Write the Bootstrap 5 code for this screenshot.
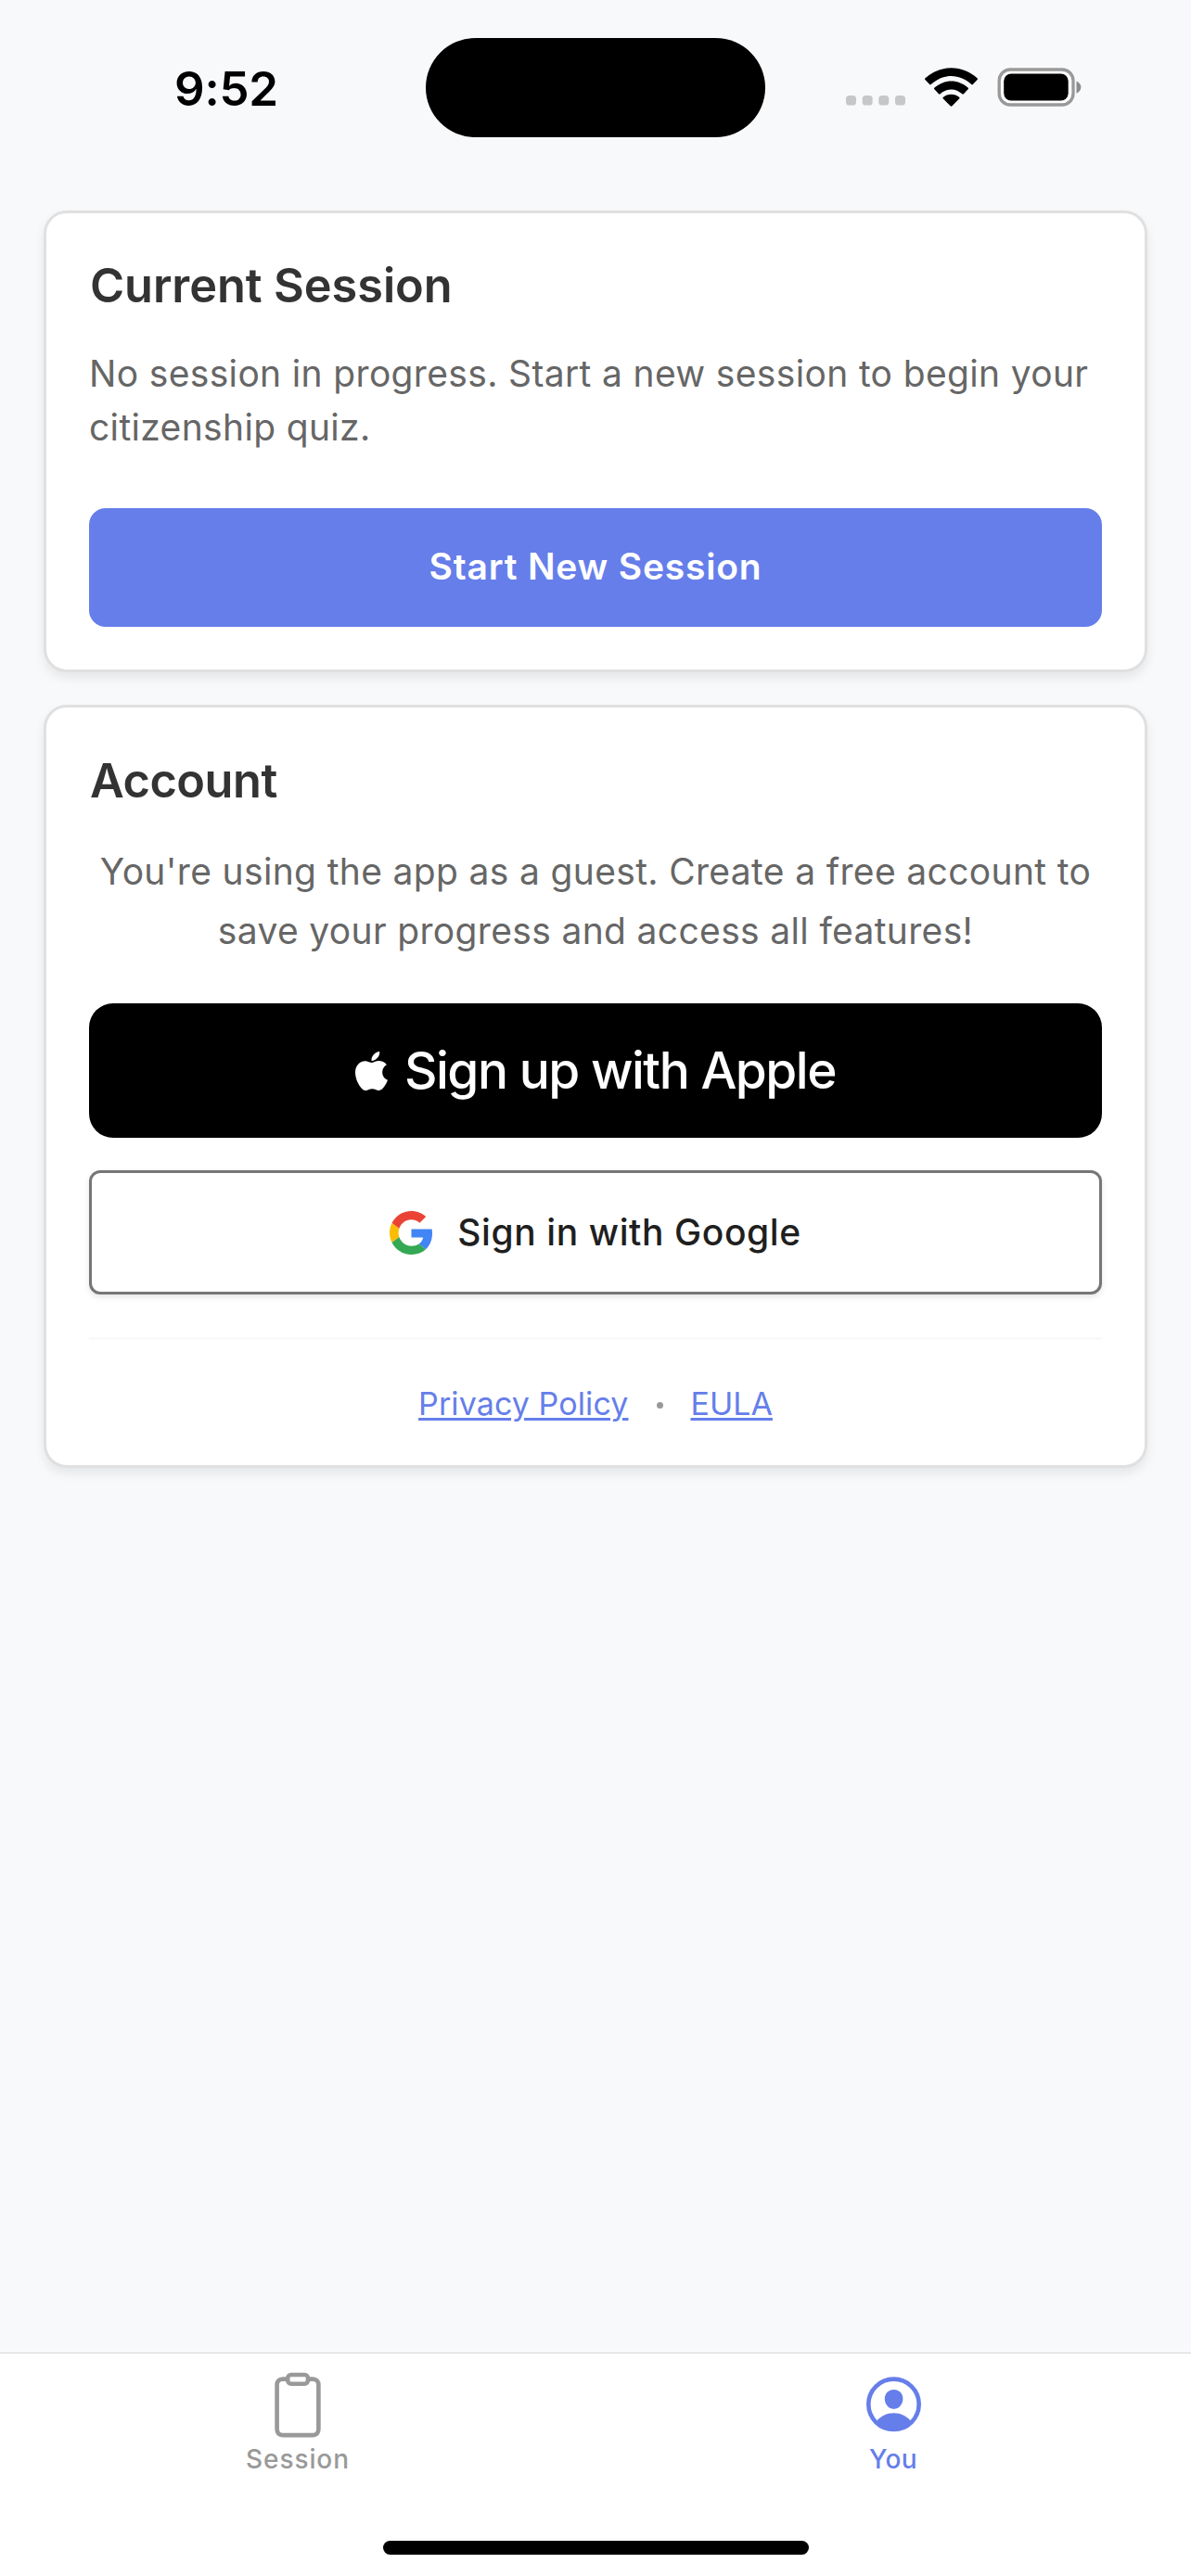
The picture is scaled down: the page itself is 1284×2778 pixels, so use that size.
<!DOCTYPE html>
<html lang="en">
<head>
<meta charset="utf-8">
<meta name="viewport" content="width=device-width, initial-scale=1">
<title>Citizenship Quiz</title>
<link rel="stylesheet" href="https://cdn.jsdelivr.net/npm/bootstrap@5.3.0/dist/css/bootstrap.min.css">
<style>
  body { width: 1284px; height: 2778px; margin: 0; background: #f8f9fb; font-family: Inter, "Liberation Sans", sans-serif; overflow: hidden; }
  svg { display: block; flex: none; }
  .status-bar { height: 227px; padding-top: 40.5px; }
  .status-time { width: 459px; padding-left: 188px; font-size: 51px; font-weight: 600; line-height: 109px; letter-spacing: -.2px; color: #000; }
  .island { width: 366px; height: 107px; border-radius: 54px; background: #000; }
  .status-icons { width: 459px; padding: 32px 0 0 86.500px; }
  .dots { margin-top: 29px; }
  .wifi { margin-left: 21.500px; }
  .battery { margin-left: 20.500px; }
  .screen { padding: 0 47px; }
  .panel { border: 3px solid #e0e0e0; border-radius: 25px; padding: 46px; background: #fff; box-shadow: 0 6px 12px rgba(0,0,0,.08); }
  .panel + .panel { margin-top: 35px; }
  .panel-title { font-size: 50.5px; font-weight: 600; line-height: 64px; letter-spacing: -.1px; color: #333; margin: 0 0 34px 1px; }
  .panel-title.account { padding-top: 1px; letter-spacing: -.5px; }
  .panel-text { font-size: 39px; line-height: 58px; letter-spacing: .34px; color: #666; margin: 0; }
  .panel-text.guest { line-height: 64px; }
  .panel .btn { padding: 0; }
  .btn-start, .btn-start:hover { height: 128px; margin-top: 58px; border: 0; border-radius: 18px; background: #667eea; color: #fff; font-size: 39px; font-weight: 600; letter-spacing: .8px; }
  .panel .btn-start { padding-bottom: 1px; }
  .btn-apple, .btn-apple:hover { height: 145px; margin-top: 46px; border: 0; border-radius: 26px; background: #000; color: #fff; font-size: 55px; font-weight: 500; letter-spacing: -1.5px; gap: 18px; }
  .btn-google, .btn-google:hover { height: 134px; margin-top: 35px; border: 3px solid #747775; border-radius: 12px; background: #fff; color: #1f1f1f; font-size: 39px; font-weight: 500; letter-spacing: .6px; gap: 26px; box-shadow: 0 3px 6px rgba(0,0,0,.1); }
  .legal { margin-top: 46px; border-top: 3px solid #f8f9fa; padding: 48px 0 0; font-size: 34px; line-height: 41px; }
  .legal a { color: #667eea; text-decoration-thickness: 2.5px; text-underline-offset: 3px; }
  .legal a:first-child { letter-spacing: .1px; }
  .legal-dot { width: 7px; height: 7px; border-radius: 50%; background: #999; margin: 3px 29px 0 31px; }
  .tab-bar { height: 241px; border-top: 1px solid #d8d8d8; background: #fff; }
  .tab-item { color: #999; font-size: 28px; font-weight: 500; line-height: 34px; letter-spacing: .9px; padding-top: 17.500px; gap: 5px; }
  .tab-item.active { color: #667eea; letter-spacing: .4px; }
  .home-bar { width: 459px; height: 15px; border-radius: 8px; background: #000; margin-bottom: 23px; }
</style>
<script src="https://cdn.jsdelivr.net/npm/bootstrap@5.3.0/dist/js/bootstrap.bundle.min.js"></script>
</head>
<body class="d-flex flex-column">
<header class="status-bar d-flex align-items-start">
  <div class="status-time">9:52</div>
  <div class="island"></div>
  <div class="status-icons d-flex align-items-start">
    <svg class="dots" width="64" height="12" viewBox="0 0 64 12" fill="#c6c7c9">
      <rect x="0" y="1" width="11" height="10.5" rx="3.6"/><rect x="17.7" y="1" width="11" height="10.5" rx="3.6"/><rect x="35.3" y="1" width="11" height="10.5" rx="3.6"/><rect x="53" y="1" width="11" height="10.5" rx="3.6"/>
    </svg>
    <!-- Wi-Fi fan: two arc bands over a wedge -->
    <svg class="wifi" width="57" height="42" viewBox="0 0 56 42" preserveAspectRatio="none">
      <path d="M28 .3C17.500.3 7.800 4.500.5 11.300c-.6.6-.6 1.100-.1 1.700l4.700 5.100c.5.500 1 .5 1.500 0C12.300 12.500 19.800 9 28 9s15.700 3.500 21.400 9.100c.5.500 1 .5 1.500 0l4.700-5.100c.5-.6.5-1.100-.1-1.700C48.200 4.500 38.500.3 28 .3z"/>
      <path d="M28 14.600c-6.700 0-12.900 2.700-17.700 7-.6.6-.6 1.100-.1 1.700l4.600 5c.5.500 1 .5 1.600 0 3.100-2.900 7.200-4.900 11.600-4.900s8.500 2 11.600 4.900c.6.5 1.100.5 1.600 0l4.600-5c.5-.6.5-1.100-.1-1.700C40.900 17.300 34.700 14.600 28 14.600z"/>
      <path d="M28 28.700c-3.200 0-6.100 1.200-8.400 3.100-.6.6-.6 1.100-.1 1.700l7.600 7.800c.6.500 1.200.5 1.800 0l7.600-7.800c.5-.6.5-1.100-.1-1.700-2.300-1.900-5.200-3.100-8.400-3.100z"/>
    </svg>
    <svg class="battery" width="92" height="43" viewBox="0 0 92 43">
      <rect x="2.200" y="2" width="79.800" height="38" rx="12" fill="#fff" fill-opacity=".8" stroke="#999" stroke-width="3.300"/>
      <rect x="7.200" y="6.500" width="69.500" height="29" rx="8" fill="#000"/>
      <path d="M85.500 14.500c3 1.200 4.900 3.700 4.900 6.600s-1.900 5.400-4.900 6.600z" fill="#8c8c8c"/>
    </svg>
  </div>
</header>

<main class="screen flex-grow-1">
  <section class="panel">
    <h2 class="panel-title">Current Session</h2>
    <p class="panel-text">No session in progress. Start a new session to begin your citizenship quiz.</p>
    <button type="button" class="btn btn-start w-100">Start New Session</button>
  </section>

  <section class="panel">
    <h2 class="panel-title account">Account</h2>
    <p class="panel-text guest text-center">You're using the app as a guest. Create a free account to save your progress and access all features!</p>
    <button type="button" class="btn btn-apple w-100 d-flex align-items-center justify-content-center">
      <svg width="35" height="42" viewBox="4 32 377 448" preserveAspectRatio="none" fill="#fff"><path d="M318.7 268.7c-.2-36.7 16.4-64.4 50-84.8-18.800-26.900-47.200-41.700-84.700-44.600-35.500-2.800-74.300 20.700-88.500 20.700-15 0-49.400-19.700-76.400-19.700C63.300 141.200 4 184.800 4 273.500q0 39.300 14.400 81.200c12.800 36.700 59 126.700 107.200 125.200 25.200-.6 43-17.900 75.800-17.900 31.800 0 48.300 17.900 76.400 17.900 48.600-.7 90.400-82.500 102.600-119.300-65.200-30.700-61.700-90-61.700-91.900zm-56.600-164.200c27.300-32.400 24.800-61.900 24-72.500-24.100 1.400-52 16.400-67.900 34.900-17.500 19.800-27.800 44.300-25.600 71.900 26.100 2 49.900-11.400 69.500-34.300z"/></svg>
      <span>Sign up with Apple</span>
    </button>
    <button type="button" class="btn btn-google w-100 d-flex align-items-center justify-content-center">
      <svg width="47" height="47" viewBox="0 0 48 48">
        <path fill="#EA4335" d="M24 9.500c3.540 0 6.710 1.220 9.210 3.600l6.850-6.850C35.900 2.380 30.470 0 24 0 14.620 0 6.510 5.380 2.560 13.220l7.980 6.190C12.430 13.720 17.740 9.500 24 9.500z"/>
        <path fill="#4285F4" d="M46.980 24.550c0-1.570-.15-3.090-.38-4.550H24v9.020h12.940c-.58 2.960-2.260 5.480-4.780 7.180l7.730 6c4.510-4.180 7.090-10.360 7.090-17.650z"/>
        <path fill="#FBBC05" d="M10.530 28.590c-.48-1.450-.76-2.990-.76-4.590s.27-3.140.76-4.590l-7.980-6.190C.92 16.460 0 20.120 0 24c0 3.880.92 7.540 2.560 10.780l7.970-6.190z"/>
        <path fill="#34A853" d="M24 48c6.480 0 11.930-2.130 15.890-5.810l-7.730-6c-2.150 1.450-4.920 2.300-8.160 2.300-6.260 0-11.570-4.220-13.470-9.910l-7.980 6.190C6.510 42.620 14.620 48 24 48z"/>
      </svg>
      <span>Sign in with Google</span>
    </button>
    <div class="legal d-flex justify-content-center align-items-center">
      <a href="#">Privacy Policy</a>
      <span class="legal-dot"></span>
      <a href="#">EULA</a>
    </div>
  </section>
</main>

<footer class="tab-bar d-flex flex-column justify-content-between align-items-center">
  <nav class="d-flex w-100">
    <div class="tab-item w-50 d-flex flex-column align-items-center">
      <svg width="72" height="74" viewBox="0 0 72 74" fill="none" stroke="#999" stroke-width="4.600">
        <path d="M23.500 9.600h-3.700c-4 0-6.200 2.600-6.200 6.500v47.500c0 4 2.200 6.500 6.200 6.500h32.400c4 0 6.200-2.500 6.200-6.500V16.100c0-3.900-2.200-6.500-6.200-6.500h-3.700"/>
        <rect x="25.200" y="5" width="21.800" height="9.700" rx="3.600"/>
      </svg>
      <span>Session</span>
    </div>
    <div class="tab-item active w-50 d-flex flex-column align-items-center">
      <svg width="72" height="74" viewBox="0 0 72 74">
        <circle cx="36.500" cy="36.800" r="27.200" fill="none" stroke="#667eea" stroke-width="4.600"/>
        <path d="M36.600 21c5.700 0 9.800 4.300 9.800 9.800 0 5.900-4.100 11.100-9.800 11.100s-9.800-5.200-9.800-11.100c0-5.500 4.100-9.800 9.800-9.800z" fill="#667eea"/>
        <path d="M18.300 54.700C22.600 49.500 29.300 46.300 36.500 46.300s13.900 3.200 18.200 8.400C50.500 61 44 65 36.500 65s-14-4-18.200-10.300z" fill="#667eea"/>
      </svg>
      <span>You</span>
    </div>
  </nav>
  <div class="home-bar"></div>
</footer>
</body>
</html>
